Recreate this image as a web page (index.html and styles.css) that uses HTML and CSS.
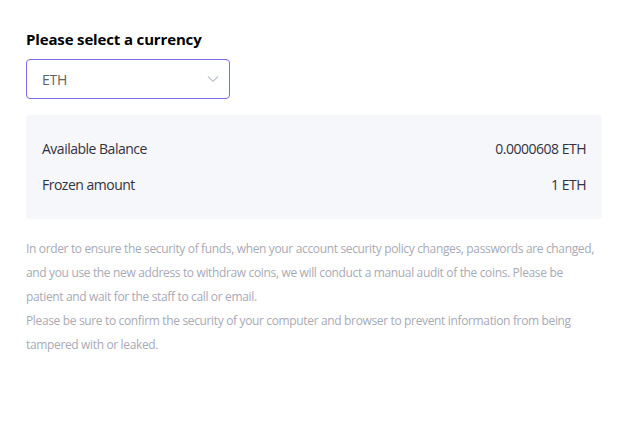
FILE: index.html
```html
<!DOCTYPE html>
<html>
<head lang="en">
	<meta charset="UTF-8">
	<title>Withdraw</title>
	<link rel="stylesheet" href="styles.css">
</head>
<body>

<div class="wrapper">
	<h3 class="title">Please select a currency</h3>

	<div class="select">
		<span class="select-value">ETH</span>
		<svg class="select-arrow" width="12" height="8" viewBox="0 0 12 8"><path d="M1 1.5 L6 6.5 L11 1.5" fill="none" stroke="#c0c4cc" stroke-width="1.2"/></svg>
	</div>

	<div class="balance">
		<div class="balance-row">
			<span>Available Balance</span>
			<span>0.0000608 ETH</span>
		</div>
		<div class="balance-row">
			<span>Frozen amount</span>
			<span>1 ETH</span>
		</div>
	</div>

	<p class="notice">In order to ensure the security of funds, when your account security policy changes, passwords are changed, and you use the new address to withdraw coins, we will conduct a manual audit of the coins. Please be patient and wait for the staff to call or email.<br>Please be sure to confirm the security of your computer and browser to prevent information from being tampered with or leaked.</p>
</div>

</body>
</html>
```

FILE: styles.css
```css
* {
	margin: 0;
	padding: 0;
	box-sizing: border-box;
}
body {
	font-family: "Open Sans", "Noto Sans", sans-serif;
	background: #ffffff;
	color: #333333;
}
.wrapper {
	padding: 29px 18px 0 26px;
}
.title {
	font-size: 15px;
	font-weight: 700;
	color: #000000;
	line-height: 20px;
	letter-spacing: -0.15px;
	margin-bottom: 10px;
}
.select {
	width: 204px;
	height: 40px;
	border: 1px solid #7b6cf0;
	border-radius: 4px;
	display: flex;
	align-items: center;
	justify-content: space-between;
	padding: 0 10px 0 15px;
	margin-bottom: 16px;
}
.select-value {
	font-size: 14px;
	color: #606266;
	letter-spacing: -0.3px;
}
.balance {
	background: #f6f7fb;
	border-radius: 4px;
	padding: 22px 16px 22px 16px;
	margin-bottom: 18px;
}
.balance-row {
	display: flex;
	justify-content: space-between;
	font-size: 14px;
	line-height: 24px;
	color: #333340;
	letter-spacing: -0.5px;
}
.balance-row + .balance-row {
	margin-top: 12px;
}
.notice {
	font-size: 12px;
	line-height: 24px;
	color: #a8aab6;
	letter-spacing: -0.35px;
}
```
